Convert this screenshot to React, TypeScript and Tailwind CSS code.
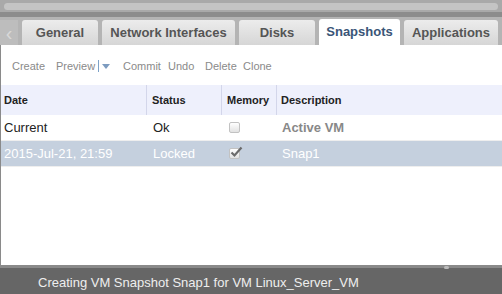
import { useState } from 'react';

export default function App() {
  const [selected, setSelected] = useState('snap1');

  const tabs = [
    { label: 'General', w: 'w-[76px]' },
    { label: 'Network Interfaces', w: 'w-[133px]' },
    { label: 'Disks', w: 'w-[76px]' },
    { label: 'Snapshots', w: 'w-[81px]', active: true },
    { label: 'Applications', w: 'w-[94px]' },
  ];

  const actions = [
    { label: 'Create', w: 'w-[44px]' },
    { label: 'Preview', w: 'w-[67px]' },
    { label: 'Commit', w: 'w-[45px]' },
    { label: 'Undo', w: 'w-[37px]' },
    { label: 'Delete', w: 'w-[38px]' },
    { label: 'Clone', w: 'w-[40px]' },
  ];

  const rows = [
    { id: 'current', date: 'Current', status: 'Ok', memory: false, description: 'Active VM', bold: true },
    { id: 'snap1', date: '2015-Jul-21, 21:59', status: 'Locked', memory: true, description: 'Snap1', bold: false },
  ];

  return (
    <div className="w-[502px] h-[294px] flex flex-col overflow-hidden bg-[#ababab] font-['Liberation_Sans',Arial,sans-serif]">
      {/* Top scroller strip */}
      <div className="h-[12px] flex items-center px-[4px] bg-[#a9a9a9]">
        <div className="h-[7px] flex-1 rounded-full bg-[#c4c4c4]" />
      </div>
      <div className="h-[5px] bg-[#8c8c8c]" />

      {/* Tabs */}
      <div className="h-[28px] flex items-end gap-[4px] bg-[#b4b4b4]">
        <div className="w-[18px] h-[25px] flex items-center justify-center bg-[#bdbdbd] text-[#d8d8d8] text-[20px] leading-none">
          ‹
        </div>
        {tabs.map((tab) => (
          <div
            key={tab.label}
            className={`${tab.w} flex items-center justify-center rounded-t-[3px] text-[13px] font-bold ${
              tab.active
                ? 'h-[26px] bg-white text-[#3a5577]'
                : 'h-[25px] bg-gradient-to-b from-[#ececec] to-[#d6d6d6] text-[#555]'
            }`}
          >
            {tab.label}
          </div>
        ))}
      </div>

      {/* Content */}
      <div className="flex-1 flex flex-col bg-white border-l border-[#8a8a8a]">
        <div className="h-[40px] flex items-center pl-[11px] pt-[2px] text-[11px] text-[#8a8a8a]">
          {actions.map((a) =>
            a.label === 'Preview' ? (
              <span key={a.label} className={`${a.w} flex items-center`}>
                Preview
                <span className="ml-[3px] mr-[3px] h-[12px] w-px bg-[#7da2c8]" />
                <svg width="8" height="5" viewBox="0 0 8 5">
                  <path d="M0 0 L8 0 L4 5 Z" fill="#7d9cc0" />
                </svg>
              </span>
            ) : (
              <span key={a.label} className={a.w}>
                {a.label}
              </span>
            )
          )}
        </div>

        <div className="grid grid-cols-[146px_75px_55px_1fr] h-[30px] bg-[#eef0fc] text-[11px] font-bold text-[#222]">
          <div className="flex items-center pl-[3px] border-r border-[#d3d6ea]">Date</div>
          <div className="flex items-center pl-[5px] border-r border-[#d3d6ea]">Status</div>
          <div className="flex items-center pl-[5px] border-r border-[#d3d6ea]">Memory</div>
          <div className="flex items-center pl-[4px]">Description</div>
        </div>

        {rows.map((r) => {
          const sel = selected === r.id;
          return (
            <div
              key={r.id}
              onClick={() => setSelected(r.id)}
              className={`grid grid-cols-[146px_75px_55px_1fr] h-[26px] text-[13px] border-b border-[#eeeeee] ${
                sel ? 'bg-[#c5d0de] text-white' : 'bg-white text-[#222]'
              }`}
            >
              <div className="flex items-center pl-[3px]">{r.date}</div>
              <div className="flex items-center pl-[6px]">{r.status}</div>
              <div className="flex items-center pl-[7px]">
                <span className="relative w-[11px] h-[11px] rounded-[2px] border border-[#c2c2c2] bg-gradient-to-b from-white to-[#e2e2e2]">
                  {r.memory && (
                    <svg className="absolute -top-[3px] left-0" width="13" height="12" viewBox="0 0 13 12">
                      <path d="M1.5 6.5 L4.5 9.5 L11.5 1.5" stroke="#6b6b6b" strokeWidth="2.2" fill="none" />
                    </svg>
                  )}
                </span>
              </div>
              <div className={`flex items-center pl-[5px] ${r.bold ? 'font-bold text-[#888]' : ''}`}>
                {r.description}
              </div>
            </div>
          );
        })}
      </div>

      {/* Status footer */}
      <div className="h-[3px] bg-[#8a8a8a]" />
      <div className="relative h-[26px] flex items-center pl-[38px] pt-[3px] bg-[#666] text-[13px] text-[#eee]">
        <span className="absolute left-[444px] top-[-2px] w-[5px] h-[3px] rounded-full bg-[#bbb]" />
        Creating VM Snapshot Snap1 for VM Linux_Server_VM
      </div>
    </div>
  );
}
